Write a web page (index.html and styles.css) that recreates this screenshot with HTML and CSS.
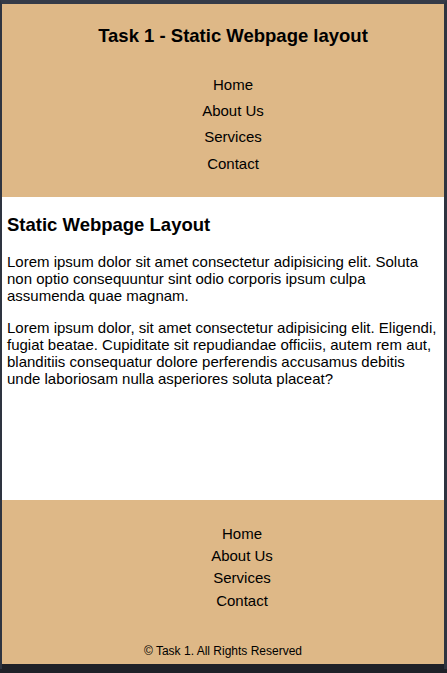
FILE: index.html
```html
<!DOCTYPE html>
<html lang="en">
<head>
  <meta charset="UTF-8" />
  <meta name="viewport" content="width=device-width, initial-scale=1.0"/>
  <title>Task 1 - Static Webpage layout</title>
  <link rel="stylesheet" href="styles.css">
</head>
<body>

  <div class="page">
    <!-- Header -->
    <header class="header">
      <h1>Task 1 - Static Webpage layout</h1>
      <ul class="nav">
        <li><a href="#">Home</a></li>
        <li><a href="#">About Us</a></li>
        <li><a href="#">Services</a></li>
        <li><a href="#">Contact</a></li>
      </ul>
    </header>

    <!-- Contenido -->
    <main class="content">
      <h2>Static Webpage Layout</h2>
      <p>Lorem ipsum dolor sit amet consectetur adipisicing elit. Soluta non optio consequuntur sint odio corporis ipsum culpa assumenda quae magnam.</p>
      <p>Lorem ipsum dolor, sit amet consectetur adipisicing elit. Eligendi, fugiat beatae. Cupiditate sit repudiandae officiis, autem rem aut, blanditiis consequatur dolore perferendis accusamus debitis unde laboriosam nulla asperiores soluta placeat?</p>
    </main>

    <!-- Footer -->
    <footer class="footer">
      <ul class="footer-nav">
        <li><a href="#">Home</a></li>
        <li><a href="#">About Us</a></li>
        <li><a href="#">Services</a></li>
        <li><a href="#">Contact</a></li>
      </ul>
      <p class="copy">&copy; Task 1. All Rights Reserved</p>
    </footer>
  </div>

</body>
</html>
```

FILE: styles.css
```css
body {
  font-family: "Liberation Sans", Arial, sans-serif;
  font-size: 15px;
  color: #000;
  margin: 0;
  background: #1f2128;
  border-top: 4px solid #353b48;
  border-left: 2px solid #2e3440;
  border-right: 3px solid #2e3440;
  min-height: 669px;
  box-sizing: border-box;
}

.page {
  background: white;
}

a {
  text-decoration: none;
  color: #000;
}

.header {
  background: #deb887;
  text-align: center;
  padding: 21px 0 20px 20px;
}

.header h1 {
  font-size: 18.5px;
  margin: 0 0 24px;
}

.nav {
  list-style: none;
  margin: 0;
  padding: 0;
}

.nav li {
  padding: 4.7px 0;
}

.content {
  padding: 0 5px;
  height: 303px;
  box-sizing: border-box;
  overflow: hidden;
  display: flow-root;
}

.content h2 {
  font-size: 18.5px;
  margin: 17px 0;
}

.content p {
  margin: 15px 0;
}

.footer {
  background: #deb887;
  text-align: center;
  padding: 23px 0 6px;
}

.footer-nav {
  list-style: none;
  margin: 0 0 33px;
  padding: 0 0 0 38px;
}

.footer-nav li {
  padding: 2.6px 0;
}

.copy {
  font-size: 12px;
  margin: 0;
}
```
